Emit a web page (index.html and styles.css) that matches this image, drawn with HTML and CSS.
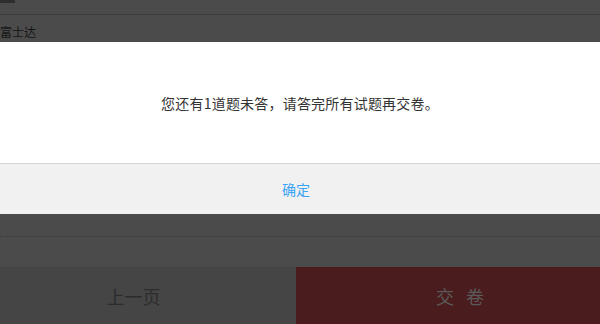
FILE: index.html
```html
<!DOCTYPE html>
<html lang="zh-CN">
<head>
<meta charset="utf-8">
<title>交卷</title>
<link rel="stylesheet" href="styles.css">
</head>
<body>
<div class="page">
  <div class="header"><span class="header-mark"></span></div>
  <div class="item">富士达</div>
  <div class="content"></div>
  <div class="divider"></div>
  <div class="footer">
    <div class="btn-prev">上一页</div>
    <div class="btn-submit">交卷</div>
  </div>
</div>
<div class="modal">
  <div class="modal-body">您还有1道题未答，请答完所有试题再交卷。</div>
  <div class="modal-btn">确定</div>
</div>
</body>
</html>
```
FILE: styles.css
```css
* { box-sizing: border-box; }
html, body { margin: 0; padding: 0; }
body {
  width: 600px;
  height: 324px;
  overflow: hidden;
  background: #4b4b4b;
  font-family: "Noto Sans CJK SC", "Noto Sans", sans-serif;
  position: relative;
}
.page {
  display: flex;
  flex-direction: column;
  height: 324px;
}
.header {
  height: 15px;
  border-bottom: 1px solid #3e3e3e;
}
.header-mark {
  display: block;
  width: 15px;
  height: 3px;
  background: #2e2e2e;
}
.item {
  height: 27px;
  font-size: 12px;
  line-height: 34px;
  color: #151515;
}
.content { height: 194px; }
.divider {
  height: 0;
  border-top: 1px dotted #3a3a3a;
}
.content + .divider { margin-bottom: 30px; }
.footer {
  display: flex;
  height: 57px;
}
.btn-prev {
  width: 296px;
  padding-right: 29px;
  background: #454545;
  color: #2c2c2c;
  font-size: 18px;
  display: flex;
  align-items: center;
  justify-content: center;
}
.btn-submit {
  flex: 1;
  background: #4a1c1d;
  color: #5a5a5a;
  font-size: 18px;
  letter-spacing: 12px;
  padding-left: 36px;
  display: flex;
  align-items: center;
  justify-content: center;
}
.modal {
  position: absolute;
  top: 42px;
  left: 0;
  right: 0;
}
.modal-body {
  height: 122px;
  background: #fff;
  border-bottom: 1px solid #d3d3d3;
  color: #333;
  font-size: 14px;
  letter-spacing: 0.2px;
  display: flex;
  align-items: center;
  justify-content: center;
}
.modal-btn {
  height: 50px;
  padding-right: 8px;
  background: #f1f1f1;
  color: #3aa3f5;
  font-size: 14px;
  display: flex;
  align-items: center;
  justify-content: center;
}
```
